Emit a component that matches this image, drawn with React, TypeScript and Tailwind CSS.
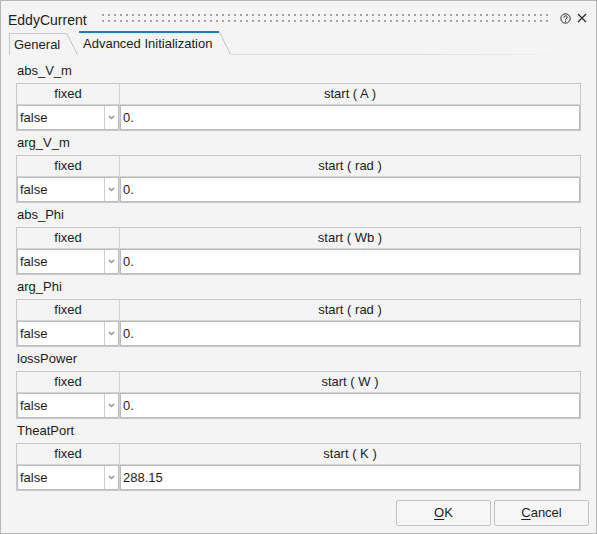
import React from 'react';

type Param = {
  name: string;
  unit: string;
  value: string;
};

const params: Param[] = [
  { name: 'abs_V_m', unit: 'A', value: '0.' },
  { name: 'arg_V_m', unit: 'rad', value: '0.' },
  { name: 'abs_Phi', unit: 'Wb', value: '0.' },
  { name: 'arg_Phi', unit: 'rad', value: '0.' },
  { name: 'lossPower', unit: 'W', value: '0.' },
  { name: 'TheatPort', unit: 'K', value: '288.15' },
];

// grip dots in the title bar
const GripDots = () => (
  <svg width="446" height="10" className="block">
    <defs>
      <pattern id="grip" width="6" height="6" patternUnits="userSpaceOnUse">
        <rect x="0" y="1" width="2" height="2" fill="#a3a3a3" />
      </pattern>
    </defs>
    <rect x="0" y="0" width="446" height="10" fill="url(#grip)" />
  </svg>
);

const HelpIcon = () => (
  <svg width="11" height="11" viewBox="0 0 11 11" fill="none" className="block">
    <circle cx="5.5" cy="5.5" r="4.7" stroke="#2b2b2b" strokeWidth="1" />
    <path
      d="M3.9 4.4a1.6 1.6 0 1 1 2.3 1.4c-0.5 0.3-0.7 0.6-0.7 1.1"
      stroke="#2b2b2b"
      strokeWidth="1"
      strokeLinecap="round"
    />
    <circle cx="5.5" cy="8.3" r="0.6" fill="#2b2b2b" />
  </svg>
);

const CloseIcon = () => (
  <svg width="10" height="10" viewBox="0 0 10 10" fill="none" className="block">
    <path d="M1 1L9 9M9 1L1 9" stroke="#2b2b2b" strokeWidth="1.2" />
  </svg>
);

const TabSlant = ({ height }: { height: number }) => (
  <svg width="12" height={height} className="block shrink-0">
    <line x1="0.5" y1="0" x2="11.5" y2={height - 0.5} stroke="#c4c4c4" strokeWidth="1" />
  </svg>
);

const Chevron = () => (
  <svg width="7" height="5" viewBox="0 0 7 5" fill="none" className="block">
    <path d="M1 1L3.5 3.5L6 1" stroke="#8a8a8a" strokeWidth="1.3" />
  </svg>
);

const ParamTable = ({ p }: { p: Param }) => (
  <div className="h-[72px] flex flex-col">
    <div className="h-[24px] flex items-center pl-px">{p.name}</div>
    <div className="grid grid-cols-[102px_1fr] gap-px border border-[#c8c8c8] bg-[#d2d2d2]">
      <div className="h-[20px] bg-[#f4f4f4] flex items-center justify-center">fixed</div>
      <div className="h-[20px] bg-[#f4f4f4] flex items-center justify-center">
        start ( {p.unit} )
      </div>
      <div className="h-[25px] bg-white border border-[#bdbdbd] flex">
        <div className="flex-1 flex items-center pl-[2px]">false</div>
        <div className="w-[14px] border-l border-[#cfcfcf] flex items-center justify-center">
          <Chevron />
        </div>
      </div>
      <div className="h-[25px] bg-white border border-[#bdbdbd] flex items-center pl-[2px]">
        {p.value}
      </div>
    </div>
  </div>
);

export default function App() {
  return (
    <div className="w-[597px] h-[534px] bg-[#f4f4f4] border border-[#b7b7b7] flex flex-col font-['Liberation_Sans',Arial,sans-serif] text-[13px] text-[#1c1c1c]">
      {/* Title bar */}
      <div className="h-[30px] pt-[4px] flex items-center pl-[7px]">
        <span className="text-[14px] leading-[18px] mt-[4px] text-[#222]">EddyCurrent</span>
        <div className="ml-[15px]">
          <GripDots />
        </div>
        <div className="ml-[12px]">
          <HelpIcon />
        </div>
        <div className="ml-[6px]">
          <CloseIcon />
        </div>
      </div>

      {/* Tabs */}
      <div className="h-[24px] flex items-end pl-[8px]">
        <div className="flex items-end">
          <div className="h-[22px] w-[57px] border-l border-t border-[#c9c9c9] flex items-center pl-[4px] pt-px">
            General
          </div>
          <TabSlant height={22} />
        </div>
        <div className="flex items-end ml-px">
          <div className="h-[24px] w-[140px] border-t-2 border-[#1d7db5] flex items-center pl-[4px] pb-px">
            Advanced Initialization
          </div>
          <svg width="12" height="24" className="block shrink-0">
            <line x1="0.5" y1="1" x2="11.5" y2="23.5" stroke="#c4c4c4" strokeWidth="1" />
          </svg>
        </div>
        <div className="flex-1 mr-[14px] h-px bg-gradient-to-r from-[#d9d9d9] via-[#dcdcdc] to-transparent" />
      </div>

      {/* Parameter tables */}
      <div className="pt-[4px] px-[15px] flex flex-col">
        {params.map((p) => (
          <ParamTable key={p.name} p={p} />
        ))}
      </div>

      <div className="flex-1" />

      {/* Buttons */}
      <div className="flex justify-end gap-[3px] pr-[7px] pb-[7px]">
        <button className="w-[95px] h-[26px] border border-[#c3c3c3] rounded-[2px] bg-[#f6f6f6] text-[#1c1c1c]">
          <span className="underline underline-offset-2">O</span>K
        </button>
        <button className="w-[95px] h-[26px] border border-[#c3c3c3] rounded-[2px] bg-[#f6f6f6] text-[#1c1c1c]">
          <span className="underline underline-offset-2">C</span>ancel
        </button>
      </div>
    </div>
  );
}
